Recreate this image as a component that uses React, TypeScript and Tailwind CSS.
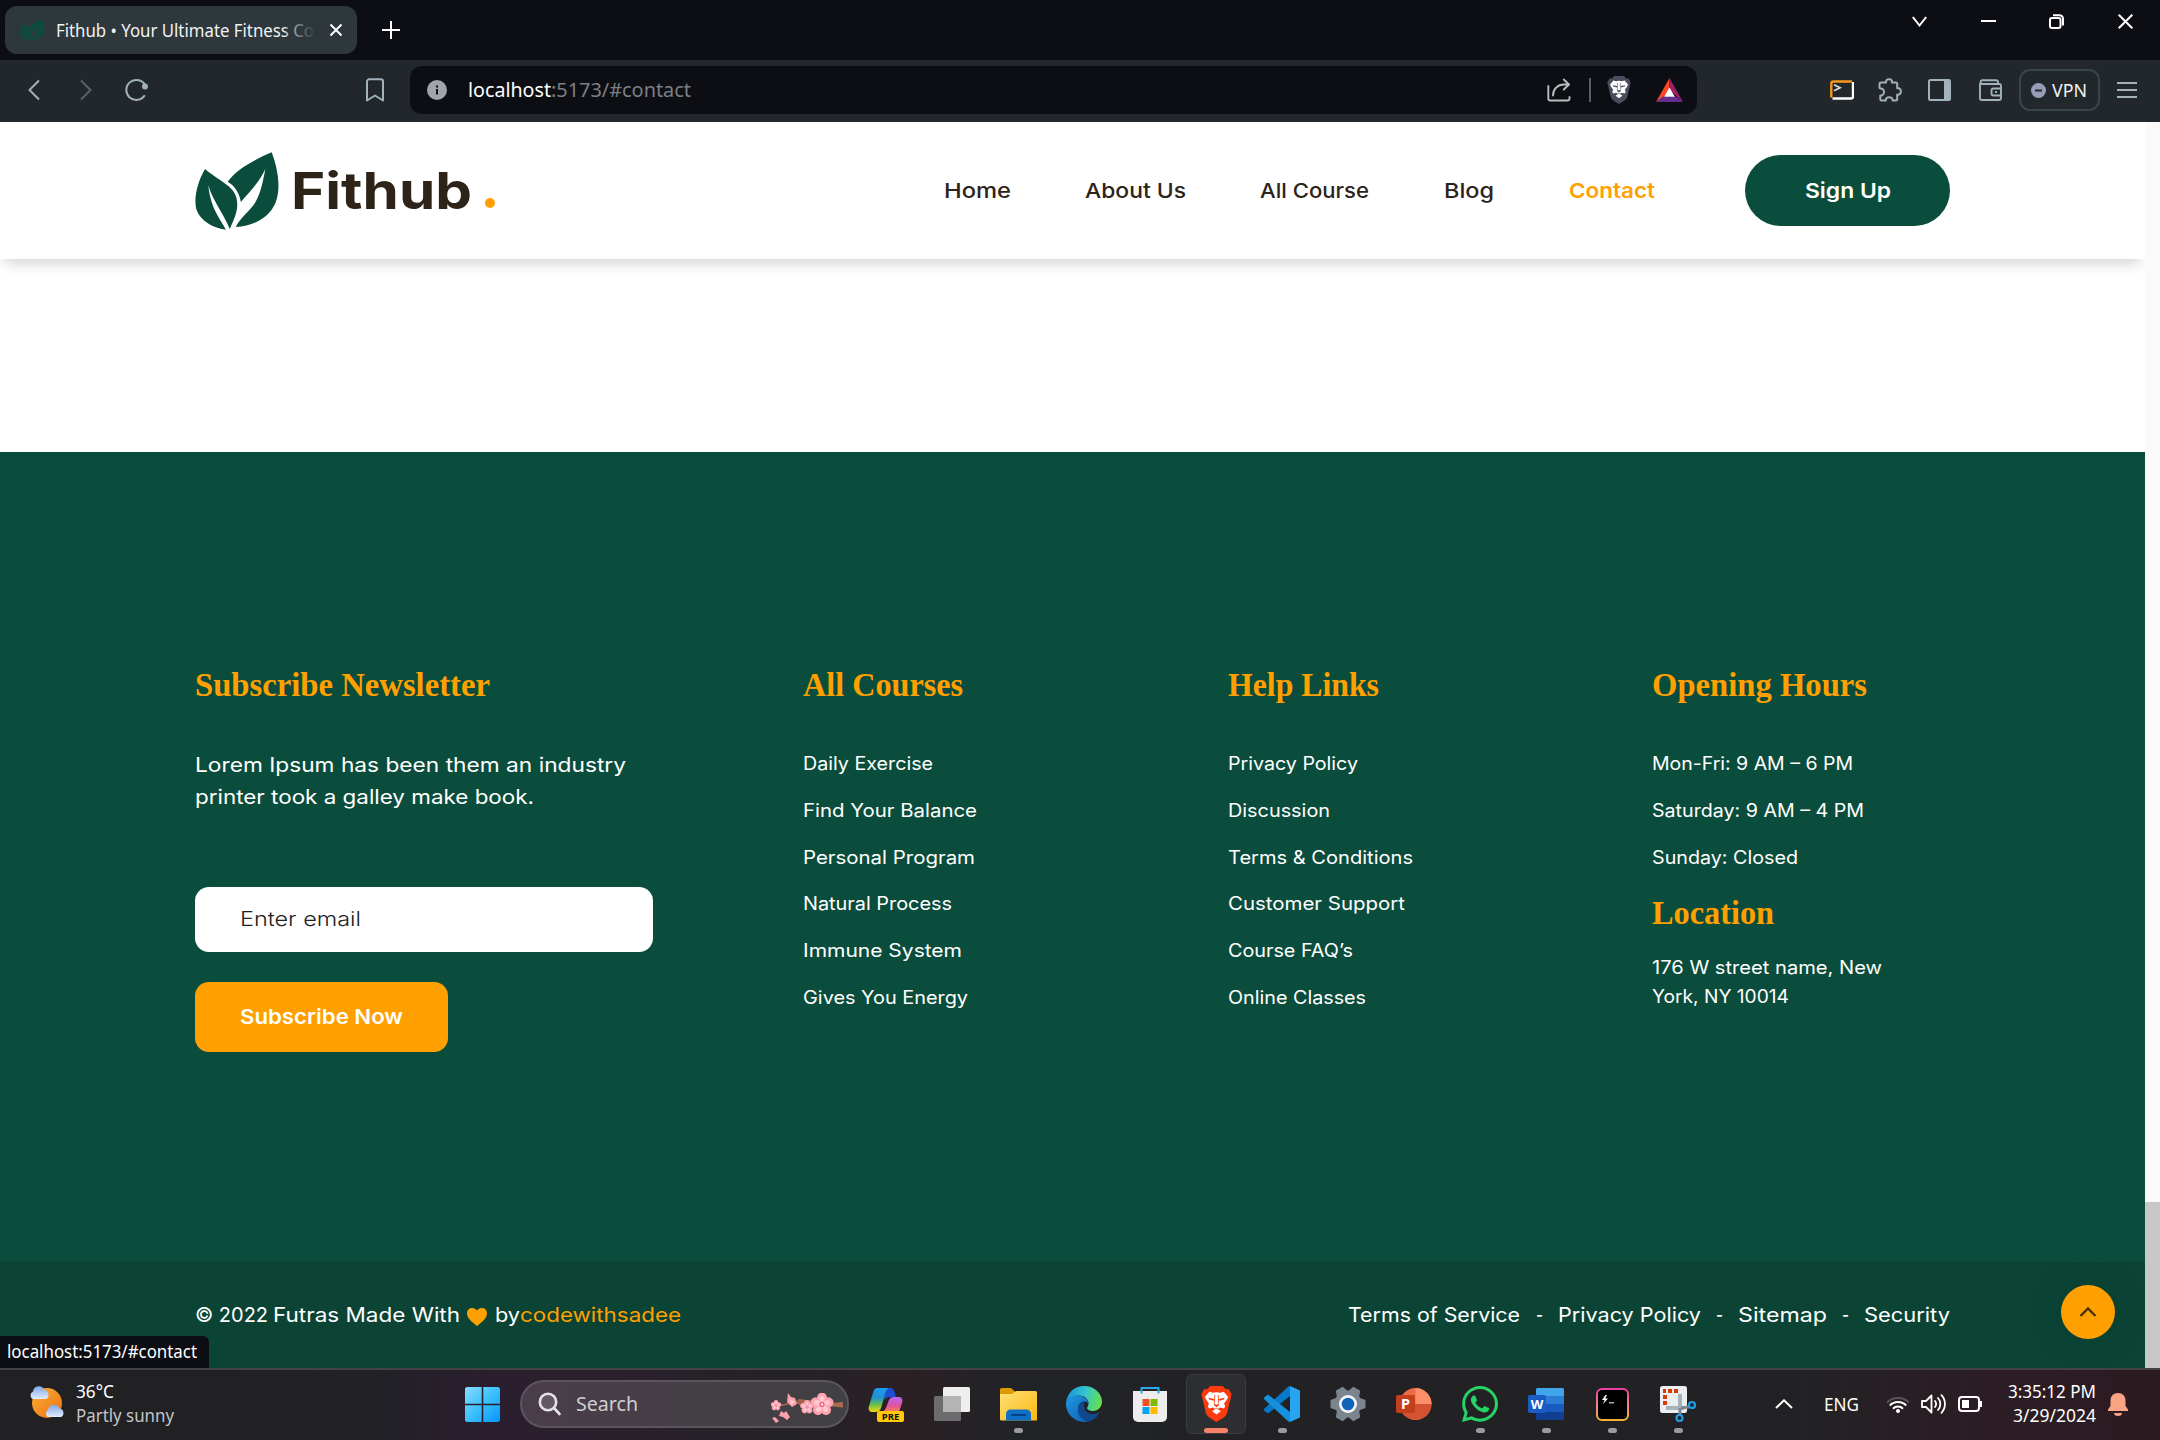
import { useLayoutEffect, useRef } from "react";
import type { ReactNode } from "react";
import { FaWhatsapp } from "react-icons/fa";

type FitProps = { className: string; children: ReactNode };

/** One line of text, stretched or condensed to fill the width of its box. */
function Fit({ className, children }: FitProps) {
  const box = useRef<HTMLSpanElement>(null);
  const text = useRef<HTMLSpanElement>(null);
  useLayoutEffect(() => {
    if (!box.current || !text.current) return;
    text.current.style.transform = "none";
    const natural = text.current.getBoundingClientRect().width;
    const wanted = box.current.getBoundingClientRect().width;
    text.current.style.transform = `scaleX(${wanted / natural})`;
  });
  return (
    <span ref={box} className={`block shrink-0 text-left whitespace-nowrap ${className}`}>
      <span ref={text} className="inline-block origin-left">
        {children}
      </span>
    </span>
  );
}

function Leaves({ className }: { className: string }) {
  return (
    <svg viewBox="14 19 251 233" className={className} fill="#0b4d3c">
      <path d="M243 20C185 45 136 72 112 108C132 120 147 142 151 168C175 140 205 112 224 70C216 115 208 150 190 176C170 202 145 222 136 243C190 240 235 215 254 172C272 128 262 70 243 20Z" />
      <path d="M44 70C20 110 10 160 18 190C30 225 65 245 106 251C95 225 60 190 54 118C65 160 95 195 118 249C130 220 142 200 140 168C136 120 90 110 44 70Z" />
    </svg>
  );
}

function TabStrip() {
  return (
    <div className="flex h-[60px] items-center bg-[#0d0e13]">
      <div className="ml-[5px] flex h-12 w-[352px] items-center rounded-xl bg-[#2e373b]">
        <Leaves className="ml-[15px] h-[22px] w-6 shrink-0" />
        <div className="relative ml-3 w-[259px]">
          <Fit className="w-[258px] text-[18px] leading-6 text-[#f1f3f4]">Fithub • Your Ultimate Fitness Co</Fit>
          <div className="absolute top-0 right-0 h-full w-[30px] bg-linear-to-r from-[#2e373b]/20 to-[#2e373b]" />
        </div>
        <svg viewBox="0 0 14 14" className="ml-[14px] size-[14px] stroke-white stroke-2" fill="none">
          <path d="M1.5 1.5 12.5 12.5M12.5 1.5 1.5 12.5" />
        </svg>
      </div>
      <svg viewBox="0 0 18 18" className="ml-[25px] size-[18px] stroke-white stroke-2" fill="none">
        <path d="M9 0V18M0 9H18" />
      </svg>
      <div className="mr-[27px] ml-auto flex h-[43px] items-center gap-[53.7px] self-start">
        <svg viewBox="0 0 15 15" className="size-[15px] stroke-white stroke-2" fill="none">
          <path d="M.8 3 7.5 11.5 14.2 3" />
        </svg>
        <svg viewBox="0 0 15 15" className="size-[15px] stroke-white stroke-2" fill="none">
          <path d="M0 7H15" />
        </svg>
        <svg viewBox="0 0 15 15" className="size-[15px] stroke-white stroke-2" fill="none">
          <rect x="1" y="4" width="10.5" height="10" rx="2" />
          <path d="M4 1.2H10.5A3.5 3.5 0 0 1 14 4.7V11.5" />
        </svg>
        <svg viewBox="0 0 15 15" className="size-[15px] stroke-white stroke-2" fill="none">
          <path d="M.7.7 14.3 14.3M14.3.7.7 14.3" />
        </svg>
      </div>
    </div>
  );
}

function Toolbar() {
  return (
    <div className="flex h-[62px] items-center bg-[#21272a] pb-0.5">
      <svg viewBox="0 0 12 22" className="ml-[28px] h-[22px] w-3 stroke-[#a1b2ba] stroke-2" fill="none">
        <path d="M11 1.5 1.5 11 11 20.5" />
      </svg>
      <svg viewBox="0 0 12 22" className="ml-[40px] h-[22px] w-3 stroke-[#596267] stroke-2" fill="none">
        <path d="M1 1.5 10.5 11 1 20.5" />
      </svg>
      <svg viewBox="0 0 24 24" className="ml-8 size-6" fill="none" stroke="#a1b2ba" strokeWidth="2">
        <path d="M20.8 17.2A10 10 0 1 1 21.5 8" />
        <circle cx="21" cy="8.500" r="3" fill="#a1b2ba" stroke="none" />
      </svg>
      <svg viewBox="0 0 18 24" className="ml-[218px] h-6 w-[18px]" fill="none" stroke="#a1b2ba" strokeWidth="2" strokeLinejoin="round">
        <path d="M1 3.5A2.3 2.3 0 0 1 3.3 1.2H14.7A2.3 2.3 0 0 1 17 3.5V22.5L9 17.5 1 22.5Z" />
      </svg>

      <div className="ml-[26px] flex h-12 w-[1287px] items-center rounded-xl bg-[#0d0e13] pr-[14px] pl-[17px]">
        <svg viewBox="0 0 20 20" className="size-5 shrink-0">
          <circle cx="10" cy="10" r="10" fill="#a1a4aa" />
          <path d="M9 9H11V14.5H9ZM9 5.5H11V7.5H9Z" fill="#0d0e13" />
        </svg>
        <Fit className="ml-[21px] w-[83px] text-[20px] leading-7 text-white">localhost</Fit>
        <Fit className="w-[140px] text-[20px] leading-7 text-[#7c7f84]">:5173/#contact</Fit>
        <svg viewBox="0 0 24 24" className="ml-auto size-6 shrink-0" fill="none" stroke="#b9bbbf" strokeWidth="1.9" strokeLinecap="round" strokeLinejoin="round">
          <path d="M1.3 8V20.5A2 2 0 0 0 3.3 22.5H20.5A2 2 0 0 0 22.500 20.500V19" />
          <path d="M6 17.5C6 11 10.5 6.5 17 6.5H21.5M16.8 1.5 22 6.5 16.8 11.5" />
        </svg>
        <div className="ml-[18px] h-6 w-0.5 bg-[#5c5e63]" />
        <Lion className="ml-4 h-7 w-[24px] text-[#4a4c5e]" />
        <svg viewBox="0 0 27 24" className="ml-[25px] h-6 w-[27px] shrink-0">
          <path d="M13.5 0 0 24 13.5 15Z" fill="#ff4724" />
          <path d="M13.5 0 27 24 13.5 12Z" fill="#9e1f63" />
          <path d="M0 24 7 18.5H20L27 24Z" fill="#662d91" />
          <path d="M13.5 9.5 8.2 18.7H18.8Z" fill="#fff" />
        </svg>
      </div>

      <svg viewBox="0 0 24 20" className="ml-[133px] h-5 w-6" fill="none" strokeWidth="2.4">
        <path d="M23 2V16.5A2 2 0 0 1 21 18.5H2.5" stroke="#fff" />
        <path d="M1.3 17.5V3.2A2 2 0 0 1 3.3 1.5H22" stroke="#f7981d" />
        <path d="M4 4.8 10 7.8 4 10.8" stroke="#d5d8da" strokeWidth="1.8" />
      </svg>
      <svg viewBox="0 0 24 24" className="ml-[24px] size-6" fill="none" stroke="#a1b2ba" strokeWidth="2" strokeLinejoin="round">
        <path d="M3.300 4.600H8C7.600 2.600 8.800 1.200 11 1.200S14.400 2.600 14 4.600H17.700A1.500 1.500 0 0 1 19.200 6.100V10.200C21.300 9.800 22.900 11.200 22.900 13.400S21.300 17.200 19.200 16.600V20.900A1.500 1.500 0 0 1 17.700 22.400H14.600C14.800 20.400 13.200 19.200 11.200 19.200S7.600 20.400 7.800 22.400H3.800A1.500 1.500 0 0 1 2.300 20.900V17.600C4.800 17.700 6 16 6 14S4.800 10.400 2.300 10.600A1 1 0 0 1 1.500 9.600V6.400A1.800 1.800 0 0 1 3.300 4.600Z" />
      </svg>
      <svg viewBox="0 0 23 22" className="ml-[26px] h-[22px] w-[23px]" fill="none">
        <rect x="1" y="1" width="21" height="20" rx="1.5" stroke="#a1b2ba" strokeWidth="2" />
        <path d="M16 1H22V21H16Z" fill="#a1b2ba" />
      </svg>
      <svg viewBox="0 0 23 22" className="ml-7 h-[22px] w-[23px]" fill="none" stroke="#a1b2ba" strokeWidth="1.9" strokeLinejoin="round">
        <path d="M1 4V19A2 2 0 0 0 3 21H20A2 2 0 0 0 22 19V7A2 2 0 0 0 20 5H3A2 2 0 0 1 3 1.2H17A2 2 0 0 1 19 3.2V5" />
        <path d="M22 9.5H14.5A2 2 0 0 0 12.5 11.5V14.5A2 2 0 0 0 14.500 16.500H22M16 13H18" />
      </svg>
      <div className="ml-[17px] flex h-[42px] w-[81px] items-center rounded-[11px] border-2 border-[#38464b] pl-[10px]">
        <svg viewBox="0 0 15 15" className="size-[15px] shrink-0">
          <circle cx="7.5" cy="7.5" r="7.5" fill="#9a9bb8" />
          <path d="M4 6.5H11V8.5H4Z" fill="#21272a" />
        </svg>
        <Fit className="ml-1.5 w-[35px] text-[18px] leading-6 text-[#f0f2f3]">VPN</Fit>
      </div>
      <svg viewBox="0 0 20 16" className="ml-[17px] h-4 w-5" stroke="#a1b2ba" strokeWidth="2">
        <path d="M0 1H20M0 8H20M0 15H20" />
      </svg>
    </div>
  );
}

/** Lion on a shield; the shield takes the current text colour. */
function Lion({ className }: { className: string }) {
  return (
    <svg viewBox="0 0 32 36" preserveAspectRatio="none" className={`shrink-0 ${className}`}>
      <path
        d="M9.500 0H22.500L25.500 3.200 28.500 3 31.500 8 30.800 11.500 27 27C26 30.500 22 32.500 16 36 10 32.500 6 30.500 5 27L1.200 11.500.500 8 3.500 3 6.500 3.200Z"
        fill="currentColor"
      />
      <path
        d="M16 6.200 20 6.800 23.500 5.800 28 11 26.500 14 23.800 17.600 25 20.500 23.500 22.600 19.600 21.400 17.800 22.800 20.500 25.300 16 28.600 11.500 25.300 14.200 22.800 12.400 21.400 8.500 22.600 7 20.500 8.200 17.600 5.500 14 4 11 8.500 5.800 12 6.800Z"
        fill="#fff"
      />
      <path
        d="M7.500 11.800 13.500 13 13 14.800 8.500 13.600ZM24.500 11.800 18.500 13 19 14.800 23.500 13.600ZM13.200 17.500 16 18.800 18.800 17.500 18 19.800 16 21.200 14 19.800Z"
        fill="currentColor"
      />
      <path d="M14.200 9 13.800 17.500M17.800 9 18.200 17.500M12.500 24 16 22.300 19.500 24" stroke="currentColor" strokeWidth=".8" fill="none" />
    </svg>
  );
}

function SiteHeader() {
  return (
    <header className="relative z-10 h-[137px] bg-white pl-[195px] shadow-[0_8px_14px_-5px_rgba(10,30,25,0.22)]">
      <div className="flex h-full w-[1755px] items-center text-[#2d2319]">
        <Leaves className="h-[78px] w-[84px]" />
        <Fit className="ml-[12px] w-[181px] text-[51px] leading-[60px] font-bold">Fithub</Fit>
        <div className="mt-[24px] ml-[13px] size-[10px] rounded-full bg-[#ffa000]" />
        <nav className="ml-[449px] flex items-center text-[20.6px] leading-7 font-medium">
          <Fit className="w-[67px]">Home</Fit>
          <Fit className="ml-[74px] w-[101px]">About Us</Fit>
          <Fit className="ml-[74px] w-[109px]">All Course</Fit>
          <Fit className="ml-[75px] w-[50px]">Blog</Fit>
          <Fit className="ml-[75px] w-[86px] font-semibold text-[#ffa000]">Contact</Fit>
        </nav>
        <button className="ml-auto flex h-[71px] w-[205px] items-center justify-center rounded-full bg-[#0b4d3c] text-[20.6px] leading-7 font-semibold text-white">
          <Fit className="w-[86px]">Sign Up</Fit>
        </button>
      </div>
    </header>
  );
}

function Heading({ className, children }: FitProps) {
  return (
    <h3 className="font-['Liberation_Serif',serif] text-[34px] leading-10 font-bold text-[#ffa000]">
      <Fit className={className}>{children}</Fit>
    </h3>
  );
}

function Row({ className, children }: FitProps) {
  return (
    <li className="h-[46.8px] text-[18.4px] leading-[46.8px]">
      <Fit className={className}>{children}</Fit>
    </li>
  );
}

function FooterColumns() {
  return (
    <section className="h-[810px] bg-[#0b4d3c] pt-[213px] pl-[195px] text-white">
      <div className="grid grid-cols-[608px_425px_424px_298px]">
        <div>
          <Heading className="w-[295px]">Subscribe Newsletter</Heading>
          <p className="mt-11 text-[20.2px] leading-8">
            <Fit className="w-[431px]">Lorem Ipsum has been them an industry</Fit>
            <Fit className="w-[339px]">printer took a galley make book.</Fit>
          </p>
          <div className="mt-[74px] flex h-[65px] w-[458px] items-center rounded-[14px] bg-white pl-[45px] text-[20.2px] font-light text-[#222]">
            <Fit className="w-[121px]">Enter email</Fit>
          </div>
          <button className="mt-[30px] flex h-[70px] w-[253px] items-center justify-center rounded-[14px] bg-[#ffa000] text-[20.4px] font-semibold">
            <Fit className="w-[163px]">Subscribe Now</Fit>
          </button>
        </div>
        <div>
          <Heading className="w-[160px]">All Courses</Heading>
          <ul className="mt-[35px]">
            <Row className="w-[130px]">Daily Exercise</Row>
            <Row className="w-[174px]">Find Your Balance</Row>
            <Row className="w-[172px]">Personal Program</Row>
            <Row className="w-[149px]">Natural Process</Row>
            <Row className="w-[159px]">Immune System</Row>
            <Row className="w-[165px]">Gives You Energy</Row>
          </ul>
        </div>
        <div>
          <Heading className="w-[151px]">Help Links</Heading>
          <ul className="mt-[35px]">
            <Row className="w-[130px]">Privacy Policy</Row>
            <Row className="w-[102px]">Discussion</Row>
            <Row className="w-[185px]">Terms &amp; Conditions</Row>
            <Row className="w-[177px]">Customer Support</Row>
            <Row className="w-[125px]">Course FAQ’s</Row>
            <Row className="w-[138px]">Online Classes</Row>
          </ul>
        </div>
        <div>
          <Heading className="w-[215px]">Opening Hours</Heading>
          <ul className="mt-[35px]">
            <Row className="w-[201px]">Mon-Fri: 9 AM – 6 PM</Row>
            <Row className="w-[212px]">Saturday: 9 AM – 4 PM</Row>
            <Row className="w-[146px]">Sunday: Closed</Row>
          </ul>
          <div className="mt-[13px]">
            <Heading className="w-[122px]">Location</Heading>
          </div>
          <address className="mt-5 text-[18.4px] leading-[29px] not-italic">
            <Fit className="w-[230px]">176 W street name, New</Fit>
            <Fit className="w-[137px]">York, NY 10014</Fit>
          </address>
        </div>
      </div>
    </section>
  );
}

function FooterBar() {
  return (
    <section className="relative h-[106px] bg-[#0b4435] pl-[195px] text-[20.2px] leading-7 text-white">
      <div className="flex h-full w-[1755px] items-center">
        <Fit className="w-[73px]">© 2022</Fit>
        <Fit className="ml-[5px] w-[187px]">Futras Made With</Fit>
        <svg viewBox="0 0 20 18" className="mt-1 ml-[7px] h-[18px] w-5" fill="#ffa000">
          <path d="M10 18C6 14.5 0 10.5 0 5.4 0 2 2.4 0 5.2 0 7.2 0 9 1 10 2.6 11 1 12.8 0 14.8 0 17.6 0 20 2 20 5.4 20 10.5 14 14.5 10 18Z" />
        </svg>
        <Fit className="ml-2 w-[25px]">by</Fit>
        <Fit className="w-[161px] text-[#ffa000]">codewithsadee</Fit>
        <Fit className="ml-auto w-[172px]">Terms of Service</Fit>
        <Fit className="ml-4 w-[7px]">-</Fit>
        <Fit className="ml-[15px] w-[143px]">Privacy Policy</Fit>
        <Fit className="ml-[15px] w-[7px]">-</Fit>
        <Fit className="ml-[15px] w-[89px]">Sitemap</Fit>
        <Fit className="ml-[15px] w-[7px]">-</Fit>
        <Fit className="ml-[15px] w-[86px]">Security</Fit>
      </div>
      <div className="absolute bottom-0 left-0 flex h-8 w-[209px] items-center rounded-tr-md bg-[#0d0e13] pb-0.5 pl-[7px] font-['Noto_Sans',sans-serif]">
        <Fit className="w-[190px] text-[17.6px] leading-6">localhost:5173/#contact</Fit>
      </div>
      <button className="absolute top-[23px] right-[30px] flex size-[54px] items-center justify-center rounded-full bg-[#ffa000] shadow-[0_0_28px_rgba(0,50,40,0.35)]">
        <svg viewBox="0 0 18 12" className="h-3 w-[18px]" fill="none" stroke="#4a3410" strokeWidth="2.4">
          <path d="M1.5 10 9 2.5 16.5 10" />
        </svg>
      </button>
    </section>
  );
}

function Flower({ x, y, r }: { x: number; y: number; r: number }) {
  return (
    <g transform={`translate(${x} ${y}) scale(${r / 10})`}>
      {[0, 72, 144, 216, 288].map((a) => (
        <g key={a} transform={`rotate(${a})`}>
          <ellipse cx="0" cy="-6" rx="4.6" ry="4.8" fill="#ffa3b1" />
          <ellipse cx="0" cy="-4.2" rx="2.4" ry="3.6" fill="#ffc9d3" />
        </g>
      ))}
      <circle r="2.4" fill="#ef5d86" />
      <circle r="1.1" fill="#ffe3ea" />
    </g>
  );
}

function TaskButton({ children, dot, active }: { children: ReactNode; dot?: boolean; active?: boolean }) {
  return (
    <div className="flex h-[70px] w-[66px] shrink-0 items-center justify-center">
      <div
        className={
          active
            ? "flex h-[60px] w-[60px] flex-col items-center rounded-md border border-[#3b3c40] bg-[#2d2e32]"
            : "flex h-[60px] w-[60px] flex-col items-center border border-transparent"
        }
      >
        <div className="mt-[11px] flex h-9 items-center justify-center">{children}</div>
        {dot && <div className="mt-[6px] h-[5px] w-[9px] rounded-full bg-[#9b9b9d]" />}
        {active && <div className="mt-1.5 h-[5px] w-6 rounded-full bg-[#f58267]" />}
      </div>
    </div>
  );
}

function Taskbar() {
  return (
    <footer className="flex h-[72px] items-center border-t-2 border-[#444244] bg-[linear-gradient(90deg,#212123_0%,#212126_17%,#2b1e2e_23%,#29202b_30%,#232227_36%,#2b2024_42%,#212327_47%,#222225_60%,#222224_83%,#2c1d25_92%,#2c1a21_100%)] pb-0.5 font-['Noto_Sans',sans-serif]">
      <svg viewBox="0 0 36 34" className="mb-1 ml-[29px] h-[34px] w-9 shrink-0">
        <defs>
          <linearGradient id="sun" x1="0" y1="0" x2="1" y2="1">
            <stop offset="0" stopColor="#f9b233" />
            <stop offset="1" stopColor="#ee6f12" />
          </linearGradient>
          <linearGradient id="cloud" x1="0" y1="0" x2="0" y2="1">
            <stop offset="0" stopColor="#7fa6e8" />
            <stop offset="1" stopColor="#e3edfd" />
          </linearGradient>
        </defs>
        <circle cx="18" cy="18" r="15" fill="url(#sun)" />
        <path d="M4 14A4 4 0 0 1 4 6.600 6 6 0 0 1 15.500 5A4.800 4.800 0 0 1 17 14Z" fill="url(#cloud)" />
        <path d="M19 32A4 4 0 0 1 19 25 6 6 0 0 1 30.500 23.500A4.500 4.500 0 0 1 32 32Z" fill="url(#cloud)" />
      </svg>
      <div className="mb-0.5 ml-[11px] text-[17.6px] leading-6 text-white">
        <Fit className="w-[38px]">36°C</Fit>
        <Fit className="w-[98px] text-[#c5c5c6]">Partly sunny</Fit>
      </div>

      <svg viewBox="0 0 35 35" className="ml-[291px] size-[35px] shrink-0">
        <defs>
          <linearGradient id="win" x1="0" y1="0" x2="1" y2="1">
            <stop offset="0" stopColor="#86dcff" />
            <stop offset=".5" stopColor="#3cc0fb" />
            <stop offset="1" stopColor="#0595fb" />
          </linearGradient>
        </defs>
        <path d="M1.500 0H16.700V16.700H0V1.500ZM18.300 0H33.500L35 1.500V16.700H18.300ZM0 18.300H16.700V35H1.500L0 33.500ZM18.300 18.300H35V33.500L33.500 35H18.300Z" fill="url(#win)" />
      </svg>

      <div className="ml-5 flex h-12 w-[329px] shrink-0 items-center rounded-full border-2 border-[#5b565d] bg-linear-to-r from-[#493d4a] to-[#414042]">
        <svg viewBox="0 0 24 24" className="ml-4 size-6" fill="none" stroke="#e6e3e7" strokeWidth="2.6" strokeLinecap="round">
          <circle cx="10" cy="10" r="8.200" fill="#635963" />
          <path d="M16 16 21.500 22" />
        </svg>
        <Fit className="ml-3.5 w-[62px] text-[20px] leading-7 text-[#d0ced1]">Search</Fit>
        <svg viewBox="0 0 74 30" className="mt-2 mr-0.5 ml-auto h-[30px] w-[74px]">
          <path d="M72 9 60 10 44 8 28 6 26 8 44 11 60 13.500 72 14.500Z" fill="#a8694e" />
          <path d="M8 13 22 9.500 34 9M20 6 36 15" stroke="#a8694e" strokeWidth="1.500" fill="none" />
          <Flower x={51} y={11.5} r={11} />
          <Flower x={36} y={14} r={6.5} />
          <Flower x={5} y={12.5} r={5} />
          <path d="M17 0 20 4 24 5 26 11 21 14 16 9Z" fill="#ff9fb0" />
          <path d="M19 6 24 9 20 12Z" fill="#ffcdd6" />
          <path d="M8 23 10 18 13 20 15 18 19 24 16 27 12 24ZM1 25 4 24 8 28 5 30Z" fill="#ff9fb0" />
        </svg>
      </div>

      <div className="ml-1 flex">
        <TaskButton>
          <svg viewBox="0 0 36 36" className="size-9 shrink-0">
            <defs>
              <linearGradient id="cpA" x1="0" y1="0" x2="0" y2="1">
                <stop offset="0" stopColor="#1b9cf2" />
                <stop offset=".4" stopColor="#2191d0" />
                <stop offset=".7" stopColor="#6cc04a" />
                <stop offset="1" stopColor="#f5d90a" />
              </linearGradient>
              <linearGradient id="cpB" x1="0" y1="0" x2="0" y2="1">
                <stop offset="0" stopColor="#b565f2" />
                <stop offset=".6" stopColor="#e1559a" />
                <stop offset="1" stopColor="#f9824f" />
              </linearGradient>
            </defs>
            <path d="M17 2H22C25 2 26 4 27 7L28 11H22C19 11 18 12 17 14L14 5Z" fill="#1b4fd0" />
            <path d="M10 2H21C18 3 17.500 6 16 12L13 22C12 25 10 26 7 26H4C1 26 0 23 1 20L5 7C6 3 7.500 2 10 2Z" fill="url(#cpA)" />
            <path d="M26 11H31C34 11 35 14 34 17L31 26H14C17 25 18 22 19 19L21 14C22 12 23 11 26 11Z" fill="url(#cpB)" />
            <rect x="9" y="25" width="27" height="11" rx="2" fill="#ffc90a" />
            <text x="22.500" y="34" textAnchor="middle" fontSize="9.500" fontWeight="700" fontFamily="Noto Sans" fill="#111">PRE</text>
          </svg>
        </TaskButton>
        <TaskButton>
          <svg viewBox="0 0 36 36" className="size-9 shrink-0">
            <rect x="9" y="1" width="27" height="25" rx="1.500" fill="#eeeeee" />
            <rect x="0" y="10" width="27" height="25" rx="1.500" fill="#6c6c6e" />
            <path d="M9 10H27V26H9Z" fill="#b4b4b5" />
          </svg>
        </TaskButton>
        <TaskButton dot>
          <svg viewBox="0 0 37 36" className="h-9 w-[37px] shrink-0">
            <defs>
              <linearGradient id="fol" x1="0" y1="0" x2="1" y2="1">
                <stop offset="0" stopColor="#ffe07a" />
                <stop offset="1" stopColor="#fcb70c" />
              </linearGradient>
            </defs>
            <path d="M0 3.500A1.500 1.500 0 0 1 1.500 2H11L15 5.500V9H0Z" fill="#dd9a00" />
            <path d="M0 8H12L16 5H35.500A1.500 1.500 0 0 1 37 6.500V34.500H1.500A1.500 1.500 0 0 1 0 33Z" fill="url(#fol)" />
            <path d="M6 34.500V28A4.500 4.500 0 0 1 10.500 23.500H26.500A4.500 4.500 0 0 1 31 28V34.500Z" fill="#0f6fc5" />
            <path d="M11 28H26V30H11Z" fill="#063f82" />
          </svg>
        </TaskButton>
        <TaskButton>
          <svg viewBox="0 0 36 36" className="size-9 shrink-0">
            <defs>
              <linearGradient id="edA" x1="0" y1=".3" x2="1" y2=".5">
                <stop offset="0" stopColor="#1693d8" />
                <stop offset=".5" stopColor="#35c4d0" />
                <stop offset="1" stopColor="#66e04c" />
              </linearGradient>
              <linearGradient id="edB" x1="0" y1="0" x2="1" y2="1">
                <stop offset="0" stopColor="#1d9ae0" />
                <stop offset="1" stopColor="#0f5cb4" />
              </linearGradient>
            </defs>
            <path d="M0 17C1 7 8 0 18 0 29 0 36 8 36 15.500 36 21 32 25 27 25 23 25 21 23.500 21 22 21 21 22.500 20.500 22.500 17.500 22.500 13 18 9.500 13 9.500 6 9.500 1 13 0 17Z" fill="url(#edA)" />
            <path d="M0 17C1 12.500 5 9.200 11 9.200 17 9.200 22 13 22.300 17 18 13 12 17 12 23 12 30 18 35.500 24 35 22 35.700 20 36 18 36 8 36-.8 27 0 17Z" fill="url(#edB)" />
            <path d="M12 23C12 18.500 15 15.500 18.500 15.500 17 20 18 28 27 28 30 28 32 27 33.500 26.200 31.500 31 27 35 23 35 17 35 12 29 12 23Z" fill="#10498f" />
          </svg>
        </TaskButton>
        <TaskButton>
          <svg viewBox="0 0 36 36" className="size-9 shrink-0">
            <path d="M9.500 7V2H26.500V7" stroke="#29a9ea" strokeWidth="2" fill="none" />
            <path d="M1 5H35V31A5 5 0 0 1 30 36H6A5 5 0 0 1 1 31Z" fill="#ededed" />
            <path d="M9.500 5V7.500M26.500 5V7.500" stroke="#29a9ea" strokeWidth="2" />
            <path d="M10.500 13H17.500V20H10.500Z" fill="#f25022" />
            <path d="M18.500 13H25.500V20H18.500Z" fill="#7fba00" />
            <path d="M10.500 21H17.500V28H10.500Z" fill="#00a4ef" />
            <path d="M18.500 21H25.500V28H18.500Z" fill="#ffb900" />
          </svg>
        </TaskButton>
        <TaskButton active>
          <Lion className="h-9 w-[31px] text-[#fb3a0d]" />
        </TaskButton>
        <TaskButton dot>
          <svg viewBox="0 0 36 36" className="size-9 shrink-0">
            <path d="M26 0 26 10 4 27.500 0 24.500V23L24 .8Z" fill="#0878c9" />
            <path d="M26 36 26 26 4 8.500 0 11.500V13L24 35.200Z" fill="#1590dc" />
            <path d="M26 0 36 4.500V31.500L26 36Z" fill="#27a4f2" />
          </svg>
        </TaskButton>
        <TaskButton>
          <svg viewBox="0 0 36 36" className="size-9 shrink-0">
            <g fill="#7b858f">
              <circle cx="18" cy="18" r="13.500" />
              {[0, 60, 120].map((a) => (
                <path key={a} transform={`rotate(${a + 30} 18 18)`} d="M12 6 14 .5H22L24 6V30L22 35.500H14L12 30Z" />
              ))}
            </g>
            <circle cx="18" cy="18" r="9" fill="#f3f6f9" />
            <circle cx="18" cy="18" r="6.300" fill="#1065b8" />
          </svg>
        </TaskButton>
        <TaskButton>
          <svg viewBox="0 0 36 36" className="size-9 shrink-0">
            <circle cx="19.500" cy="18" r="16" fill="#ed6c47" />
            <path d="M19.500 2A16 16 0 0 1 35.500 18H19.500Z" fill="#ff8f6b" />
            <path d="M4 21.500A16 16 0 0 0 35.500 18H19.500Z" fill="#d35230" />
            <rect x="0" y="9" width="19" height="18" rx="2" fill="#c43e1c" />
            <text x="9.500" y="23.300" textAnchor="middle" fontSize="14.500" fontWeight="700" fontFamily="Noto Sans" fill="#fff">P</text>
          </svg>
        </TaskButton>
        <TaskButton dot>
          <FaWhatsapp viewBox="0 32 448 448" className="size-9 shrink-0 text-[#25d366]" />
        </TaskButton>
        <TaskButton dot>
          <svg viewBox="0 0 36 36" className="size-9 shrink-0">
            <path d="M8 3.500A1.500 1.500 0 0 1 9.500 2H34.500A1.500 1.500 0 0 1 36 3.500V10H8Z" fill="#41a5ee" />
            <path d="M8 10H36V18H8Z" fill="#2b7cd3" />
            <path d="M8 18H36V26H8Z" fill="#185abd" />
            <path d="M8 26H36V32.500A1.500 1.500 0 0 1 34.500 34H9.500A1.500 1.500 0 0 1 8 32.500Z" fill="#103f91" />
            <rect x="0" y="9" width="18" height="18" rx="2" fill="#1b5cc4" />
            <text x="9" y="22.800" textAnchor="middle" fontSize="13" fontWeight="700" fontFamily="Noto Sans" fill="#fff">W</text>
          </svg>
        </TaskButton>
        <TaskButton dot>
          <svg viewBox="0 0 33 33" className="size-[33px] shrink-0">
            <defs>
              <linearGradient id="term" x1="0" y1="0" x2="0" y2="1">
                <stop offset="0" stopColor="#ec3fa4" />
                <stop offset=".5" stopColor="#f0818a" />
                <stop offset="1" stopColor="#f8b23a" />
              </linearGradient>
            </defs>
            <rect x="1" y="1" width="31" height="31" rx="5" fill="#000" stroke="url(#term)" strokeWidth="2" />
            <path d="M9.500 7 6 12H8.500L7 16 12 10.500H9.200L11 7Z" fill="#fff" />
            <path d="M13 14H18V15.500H13Z" fill="#aaa" />
          </svg>
        </TaskButton>
        <TaskButton dot>
          <svg viewBox="0 0 36 36" className="size-9 shrink-0">
            <rect x="0" y="0" width="27" height="27" rx="2.500" fill="#eceff2" />
            <path d="M3 3H6V7H3ZM8 3H12V7H8ZM14 3H18V7H14ZM3 9H7V13H3ZM3 15H7V19H3Z" fill="#d83b01" />
            <path d="M18 8H22V24H18ZM6 20H24V24H6Z" fill="#a9b1ba" />
            <path d="M21 22 29 21M20 22V29" stroke="#7c8791" strokeWidth="3" />
            <circle cx="32" cy="19" r="3" fill="none" stroke="#1f9be8" strokeWidth="2.200" />
            <circle cx="19.500" cy="32" r="3" fill="none" stroke="#1f9be8" strokeWidth="2.200" />
          </svg>
        </TaskButton>
      </div>

      <svg viewBox="0 0 18 10" className="ml-[64px] h-[10px] w-[18px] shrink-0" fill="none" stroke="#fff" strokeWidth="2">
        <path d="M1 9 9 1.300 17 9" />
      </svg>
      <Fit className="ml-[31px] w-[35px] text-[18px] leading-6 text-white">ENG</Fit>
      <svg viewBox="0 0 24 18" className="ml-[27px] h-[18px] w-6 shrink-0" fill="none" strokeWidth="2">
        <path d="M1 7.500A15.500 15.500 0 0 1 23 7.500" stroke="#5e5057" />
        <path d="M3.800 10.500A11.500 11.500 0 0 1 20.200 10.500M7 13.700A7 7 0 0 1 17 13.700" stroke="#fff" />
        <circle cx="12" cy="16" r="2" fill="#fff" />
      </svg>
      <svg viewBox="0 0 25 20" className="ml-[11px] h-5 w-[25px] shrink-0" fill="none" stroke="#fff" strokeWidth="1.800" strokeLinejoin="round" strokeLinecap="round">
        <path d="M1 7V13H5L10.500 18.500V1.500L5 7Z" />
        <path d="M14 7A5 5 0 0 1 14 13M17 4A9 9 0 0 1 17 16M20.500 1.200A13 13 0 0 1 20.500 18.800" />
      </svg>
      <svg viewBox="0 0 25 16" className="ml-[12px] h-4 w-[25px] shrink-0">
        <rect x="1" y="1" width="20" height="14" rx="3" fill="none" stroke="#fff" strokeWidth="2" />
        <path d="M4 4H11V12H4ZM21 5H24V11H21Z" fill="#fff" />
      </svg>
      <div className="mb-0.5 ml-[25px] flex flex-col items-end text-[17.6px] leading-6 text-white">
        <Fit className="w-[88px]">3:35:12 PM</Fit>
        <Fit className="w-[83px]">3/29/2024</Fit>
      </div>
      <svg viewBox="0 0 20 23" className="ml-[12px] h-[23px] w-5 shrink-0" fill="#f9a483">
        <path d="M10 0C14.500 0 17.500 3 17.500 7.500V13L20 16.500V18H0V16.500L2.500 13V7.500C2.500 3 5.500 0 10 0ZM6 20H14A4 3 0 0 1 6 20Z" />
      </svg>
    </footer>
  );
}

export default function App() {
  return (
    <div className="flex h-[1440px] w-[2160px] flex-col overflow-hidden bg-white font-['Noto_Sans',sans-serif]">
      <TabStrip />
      <Toolbar />
      <div className="flex h-[1246px]">
        <main className="w-[2145px] overflow-hidden bg-white font-[Inter,sans-serif]">
          <SiteHeader />
          <div className="h-[193px]" />
          <FooterColumns />
          <FooterBar />
        </main>
        <div className="flex w-[15px] flex-col justify-end bg-[#fafafa]">
          <div className="h-[166px] bg-[#c8c8c8]" />
        </div>
      </div>
      <Taskbar />
    </div>
  );
}
